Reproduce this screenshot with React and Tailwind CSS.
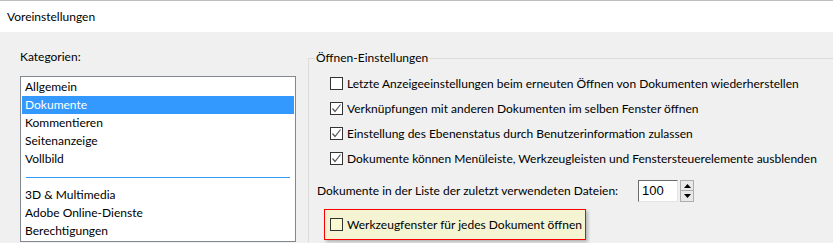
import { useState } from 'react';

const categories = [
  ['Allgemein', 'Dokumente', 'Kommentieren', 'Seitenanzeige', 'Vollbild'],
  ['3D & Multimedia', 'Adobe Online-Dienste', 'Berechtigungen'],
];

const Checkbox = ({ checked, yellow }) => (
  <span
    className={`w-[13px] h-[13px] border border-[#333333] flex items-center justify-center shrink-0 ${
      yellow ? 'bg-[#fafad2]' : 'bg-white'
    }`}
  >
    {checked && (
      <svg width="11" height="11" viewBox="0 0 11 11">
        <polyline points="1.5,5.5 4,8.5 9.5,1.5" fill="none" stroke="#555555" strokeWidth="1.2" />
      </svg>
    )}
  </span>
);

const Option = ({ checked, label }) => (
  <div className="h-[25px] flex items-center gap-[4px] pl-[21px] whitespace-nowrap">
    <Checkbox checked={checked} />
    <span>{label}</span>
  </div>
);

const App = () => {
  const [selected] = useState('Dokumente');

  return (
    <div className="w-[833px] h-[243px] overflow-hidden bg-[#f0f0f0] text-[12px] leading-[16px] text-black font-['Lato',sans-serif]">
      {/* Title bar */}
      <div className="h-[32px] bg-white border-t border-[#bdbdbd] flex items-center px-[7px]">
        Voreinstellungen
      </div>

      <div className="flex">
        {/* Categories */}
        <div className="w-[308px] shrink-0 pl-[20px] pt-[17px]">
          <div>Kategorien:</div>
          <div className="mt-[11px] w-[276px] bg-white border border-[#828790] p-px">
            {categories[0].map((c) => (
              <div
                key={c}
                className={`h-[18px] flex items-center pl-[3px] ${
                  c === selected ? 'bg-[#3399ff] text-white' : ''
                }`}
              >
                {c}
              </div>
            ))}
            <div className="h-[18px] flex items-center px-[4px]">
              <div className="h-px w-full bg-[#3399ff]" />
            </div>
            {categories[1].map((c) => (
              <div key={c} className="h-[18px] flex items-center pl-[3px]">
                {c}
              </div>
            ))}
          </div>
        </div>

        {/* Opening settings */}
        <fieldset className="w-[525px] shrink-0 mt-[18px] border-t border-l border-[#dcdcdc] pt-[5px]">
          <legend className="ml-[6px] px-px leading-[16px]">Öffnen-Einstellungen</legend>
          <Option label="Letzte Anzeigeeinstellungen beim erneuten Öffnen von Dokumenten wiederherstellen" />
          <Option checked label="Verknüpfungen mit anderen Dokumenten im selben Fenster öffnen" />
          <Option checked label="Einstellung des Ebenenstatus durch Benutzerinformation zulassen" />
          <Option checked label="Dokumente können Menüleiste, Werkzeugleisten und Fenstersteuerelemente ausblenden" />

          <div className="flex items-center pl-[8px] mt-[9px] h-[22px] whitespace-nowrap">
            <span className="w-[321px]">Dokumente in der Liste der zuletzt verwendeten Dateien:</span>
            <div className="w-[40px] h-[22px] bg-white border border-t-[#6b6b6b] border-l-[#6b6b6b] border-r-[#e3e3e3] border-b-[#e3e3e3] flex items-center pl-[3px] text-[13px] font-['Liberation_Sans',sans-serif]">
              100
            </div>
            <div className="ml-[2px] flex flex-col w-[14px] h-[22px]">
              <div className="h-[11px] border border-[#adadad] bg-[#e9e9e9] flex items-center justify-center">
                <svg width="7" height="4" viewBox="0 0 7 4"><polygon points="3.5,0 7,4 0,4" fill="#000" /></svg>
              </div>
              <div className="h-[11px] border border-t-0 border-[#adadad] bg-[#e9e9e9] flex items-center justify-center">
                <svg width="7" height="4" viewBox="0 0 7 4"><polygon points="0,0 7,0 3.5,4" fill="#000" /></svg>
              </div>
            </div>
          </div>

          <div className="mt-[7px] ml-[15px] w-[262px] h-[31px] border border-[#ff0000] bg-[#f4f4d2] shadow-[2px_2px_3px_rgba(0,0,0,0.25)] flex items-center gap-[4px] pl-[5px] whitespace-nowrap">
            <Checkbox yellow />
            <span>Werkzeugfenster für jedes Dokument öffnen</span>
          </div>
        </fieldset>
      </div>
    </div>
  );
};

export default App;
